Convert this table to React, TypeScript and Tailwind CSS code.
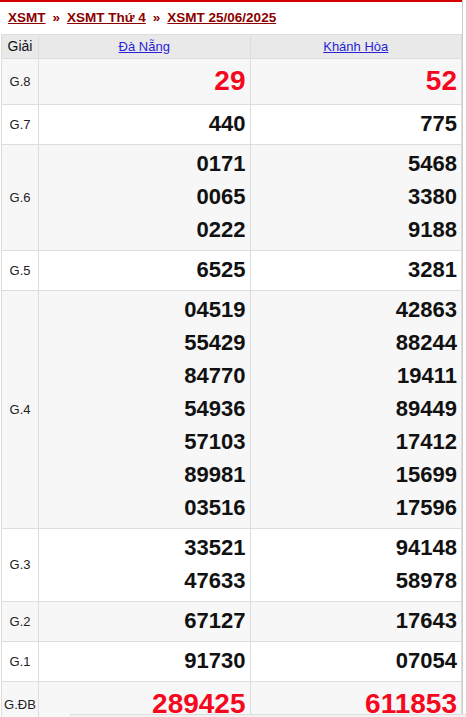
import React from "react";

type Row = { label: string; a: string[]; b: string[]; red?: boolean };

const rows: Row[] = [
  { label: "G.8", a: ["29"], b: ["52"], red: true },
  { label: "G.7", a: ["440"], b: ["775"] },
  { label: "G.6", a: ["0171", "0065", "0222"], b: ["5468", "3380", "9188"] },
  { label: "G.5", a: ["6525"], b: ["3281"] },
  {
    label: "G.4",
    a: ["04519", "55429", "84770", "54936", "57103", "89981", "03516"],
    b: ["42863", "88244", "19411", "89449", "17412", "15699", "17596"],
  },
  { label: "G.3", a: ["33521", "47633"], b: ["94148", "58978"] },
  { label: "G.2", a: ["67127"], b: ["17643"] },
  { label: "G.1", a: ["91730"], b: ["07054"] },
  { label: "G.ĐB", a: ["289425"], b: ["611853"], red: true },
];

function Nums({ items, red }: { items: string[]; red?: boolean }) {
  return (
    <td className="border border-[#dddddd] pr-[4px] pt-[2px] pb-[4px] text-right align-middle">
      {items.map((n) => (
        <div
          key={n}
          className={
            red
              ? "text-[28px] leading-[39px] font-bold text-[#f5081e]"
              : "text-[22px] leading-[33px] font-bold text-[#111111]"
          }
        >
          {n}
        </div>
      ))}
    </td>
  );
}

export default function App() {
  return (
    <div className="relative w-[466px] h-[717px] overflow-hidden bg-white font-['Liberation_Sans',Arial,sans-serif]">
      <div className="w-[463px] h-full border-r border-[#cccccc]">
        <div className="h-[2px] bg-[#d40000]" />

        {/* Breadcrumb */}
        <div className="h-[32px] flex items-center gap-[7px] pl-[8px] text-[13.5px] font-bold text-[#8b0000]">
          <a href="#" className="underline">XSMT</a>
          <span>»</span>
          <a href="#" className="underline">XSMT Thứ 4</a>
          <span>»</span>
          <a href="#" className="underline">XSMT 25/06/2025</a>
        </div>

        {/* Results table */}
        <table className="ml-[1px] w-[461px] table-fixed border-collapse">
          <colgroup>
            <col className="w-[37px]" />
            <col />
            <col />
          </colgroup>
          <thead>
            <tr className="h-[24px] bg-[#e9e9e9] text-[13px]">
              <th className="border border-[#dddddd] font-normal text-[14px] text-[#111111]">Giải</th>
              <th className="border border-[#dddddd] font-normal">
                <a href="#" className="underline text-[#2a1fd4]">Đà Nẵng</a>
              </th>
              <th className="border border-[#dddddd] font-normal">
                <a href="#" className="underline text-[#2a1fd4]">Khánh Hòa</a>
              </th>
            </tr>
          </thead>
          <tbody>
            {rows.map((r, i) => (
              <tr key={r.label} className={i % 2 === 0 ? "bg-[#f7f7f7]" : "bg-white"}>
                <td className="border border-[#dddddd] text-center align-middle text-[13px] text-[#222222]">
                  {r.label}
                </td>
                <Nums items={r.a} red={r.red} />
                <Nums items={r.b} red={r.red} />
              </tr>
            ))}
          </tbody>
        </table>
      </div>

      {/* bottom overlay edge */}
      <div className="absolute left-[70px] right-0 top-[714px] h-[3px] bg-[#f2f2f2] border-t border-[#dddddd]" />
    </div>
  );
}
